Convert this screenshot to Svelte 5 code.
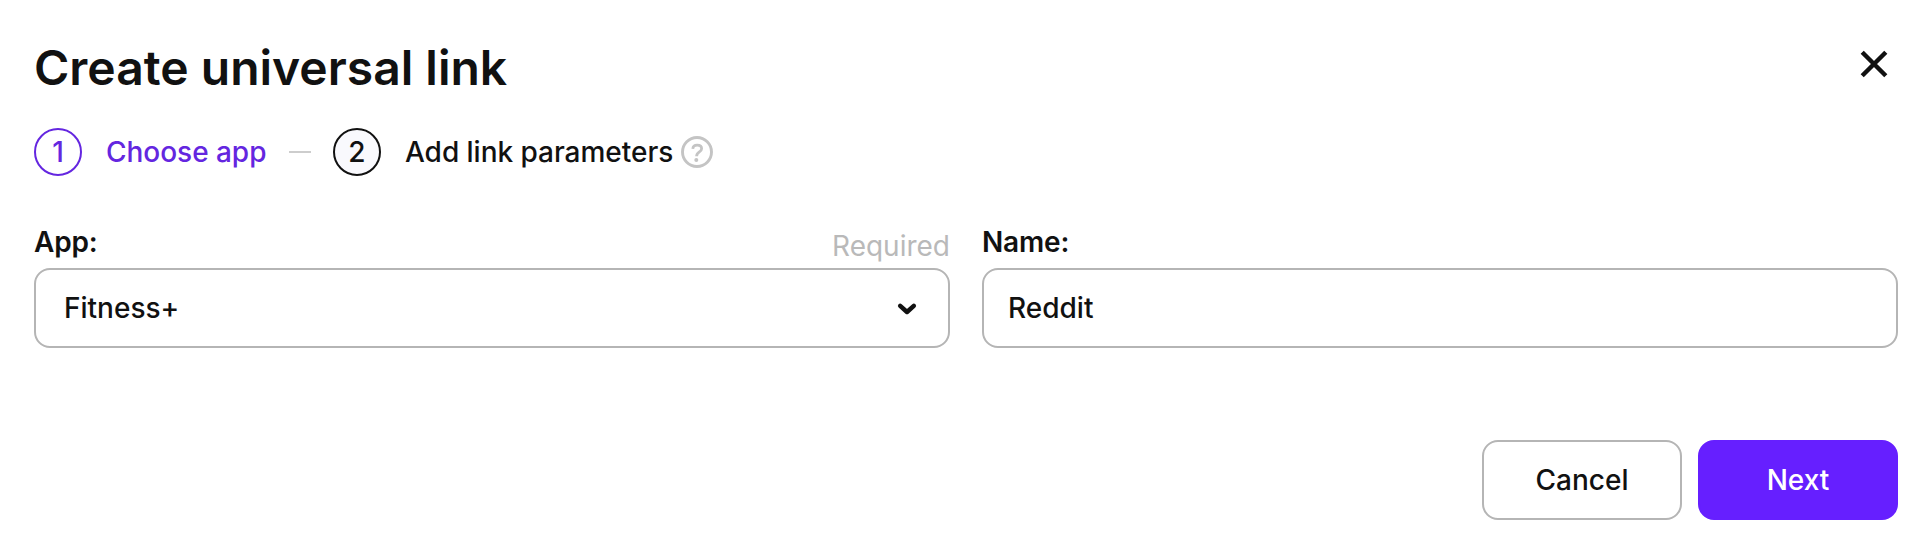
<script>
  let app = $state('Fitness+');
  let name = $state('Reddit');
</script>

<main class="dialog">
  <header>
    <h1>Create universal link</h1>
    <button class="close" aria-label="Close">
      <svg width="28" height="28" viewBox="0 0 28 28" fill="none" stroke="#111" stroke-width="4.4">
        <path d="M2.2 2.2 25.8 25.8M25.8 2.2 2.2 25.8" />
      </svg>
    </button>
  </header>

  <nav class="steps">
    <span class="circle active">1</span>
    <span class="label active choose">Choose app</span>
    <span class="dash"></span>
    <span class="circle second">2</span>
    <span class="label params">Add link parameters</span>
    <svg class="help" width="32" height="32" viewBox="0 0 32 32" fill="none" stroke="#c4c4c4" stroke-width="2.9">
      <circle cx="16" cy="16" r="14.5" />
      <path d="M11.8 12.8C12 10.4 13.7 9.1 16.2 9.1C18.8 9.1 20.6 10.5 20.6 12.7C20.6 16.2 15.6 15.5 15.6 20.2" stroke-width="2.8" />
      <circle cx="15.3" cy="24" r="2" fill="#c4c4c4" stroke="none" />
    </svg>
  </nav>

  <section class="fields">
    <div class="field">
      <div class="caption"><span class="name">App:</span><span class="required">Required</span></div>
      <div class="box select">
        <span>{app}</span>
        <svg width="20" height="14" viewBox="0 0 20 14" fill="none" stroke="#111" stroke-width="4.5" stroke-linecap="round" stroke-linejoin="round">
          <path d="M3.2 3.8 10 10 16.8 3.8" />
        </svg>
      </div>
    </div>
    <div class="field">
      <div class="caption"><span class="name">Name:</span></div>
      <div class="box"><span>{name}</span></div>
    </div>
  </section>

  <footer>
    <button class="btn">Cancel</button>
    <button class="btn primary">Next</button>
  </footer>
</main>

<style>
  :global(body) {
    background: #fff;
  }
  .dialog {
    box-sizing: border-box;
    width: 1922px;
    height: 540px;
    padding: 38px 24px 20px 34px;
    display: flex;
    flex-direction: column;
    font-family: Inter, sans-serif;
    font-size: 28px;
    color: #111;
  }
  header {
    display: flex;
    justify-content: space-between;
    height: 90px;
  }
  h1 {
    margin: 0;
    font-size: 48px;
    line-height: 60px;
    font-weight: 600;
  }
  button {
    font: inherit;
    color: inherit;
    cursor: pointer;
  }
  .close {
    width: 28px;
    height: 28px;
    margin: 12px 10px 0 0;
    padding: 0;
    border: 0;
    background: none;
  }
  .close svg,
  .select svg {
    display: block;
  }
  .steps {
    display: flex;
    align-items: center;
    height: 48px;
  }
  .circle {
    box-sizing: border-box;
    width: 48px;
    height: 48px;
    border: 2px solid #111;
    border-radius: 50%;
    text-align: center;
    line-height: 44px;
    font-weight: 500;
  }
  .second {
    background: #f9f9fd;
  }
  .circle.active {
    border-color: #6426e0;
  }
  .active {
    color: #6426e0;
  }
  .label {
    font-weight: 500;
    line-height: 48px;
    letter-spacing: -0.03px;
    white-space: nowrap;
    box-sizing: border-box;
    padding-left: 24px;
  }
  .choose {
    width: 207px;
  }
  .params {
    width: 299px;
  }
  .dash {
    width: 22px;
    height: 2px;
    margin-right: 22px;
    background: #cdcdcd;
  }
  .help {
    margin-left: 1px;
  }
  .fields {
    display: grid;
    grid-template-columns: 1fr 1fr;
    gap: 32px;
    margin-top: 44px;
  }
  .caption {
    display: flex;
    justify-content: space-between;
    height: 48px;
    line-height: 44px;
  }
  .name {
    font-weight: 600;
    letter-spacing: -0.15px;
  }
  .required {
    color: #b9b9b9;
    line-height: 52px;
  }
  .box {
    box-sizing: border-box;
    height: 80px;
    padding: 0 31px 0 24px;
    border: 2px solid #b5b5b5;
    border-radius: 16px;
    display: flex;
    align-items: center;
    justify-content: space-between;
    font-weight: 500;
  }
  .select {
    padding-left: 28px;
  }
  .select svg {
    margin-top: 2px;
  }
  footer {
    display: flex;
    justify-content: flex-end;
    gap: 16px;
    margin-top: auto;
  }
  .btn {
    box-sizing: border-box;
    width: 200px;
    height: 80px;
    padding: 0;
    border: 2px solid #b5b5b5;
    border-radius: 16px;
    background: #fff;
    font-weight: 500;
  }
  .primary {
    border-color: #661fff;
    background: #661fff;
    color: #fff;
  }
</style>
